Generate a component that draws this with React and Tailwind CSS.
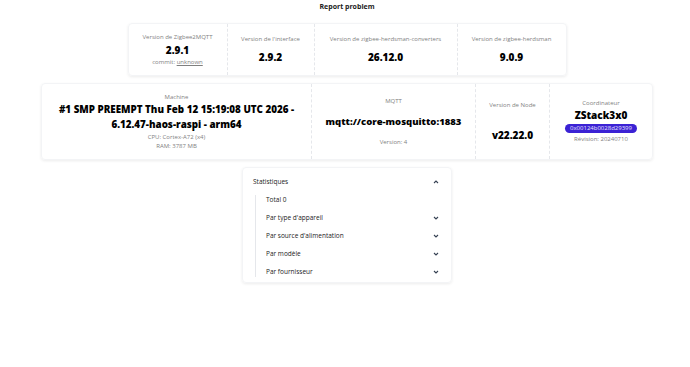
import React from 'react';

const Chevron = ({ up }) => (
  <svg width="6" height="4" viewBox="0 0 6 4" className="text-gray-700">
    <path d={up ? 'M1 3 L3 1 L5 3' : 'M1 1 L3 3 L5 1'} fill="none" stroke="currentColor" strokeWidth="1.1" />
  </svg>
);

// one stat column, rows centred like daisyUI's stat grid
const Stat = ({ title, value, desc, width, last, valueClass = 'text-[10px] leading-[14px]' }) => (
  <div
    className={`grid place-items-center text-center py-[8px] ${width} ${
      last ? '' : 'border-r border-dashed border-gray-200'
    }`}
  >
    <div className="text-[6px] leading-[9px] text-[#7f7f7f] whitespace-nowrap">{title}</div>
    <div className={`font-extrabold text-black ${valueClass}`}>{value}</div>
    {desc && <div className="text-[6px] leading-[9px] text-[#7f7f7f]">{desc}</div>}
  </div>
);

export default function App() {
  const stats = ["Par type d'appareil", "Par source d'alimentation", 'Par modèle', 'Par fournisseur'];

  return (
    <div className="w-[690px] h-[367px] bg-white font-['Open_Sans',sans-serif] flex flex-col items-center pl-[4px]">
      <div className="pt-[2px] text-[7px] leading-[10px] font-bold text-[#222]">Report problem</div>

      {/* versions */}
      <div className="mt-[11px] flex h-[53px] rounded-[4px] border border-gray-100 shadow-[0_1px_3px_rgba(0,0,0,0.08)]">
        <Stat
          width="w-[99px]"
          title="Version de Zigbee2MQTT"
          value="2.9.1"
          desc={
            <span>
              commit: <span className="underline">unknown</span>
            </span>
          }
        />
        <Stat width="w-[87px]" title="Version de l'interface" value="2.9.2" />
        <Stat width="w-[143px]" title="Version de zigbee-herdsman-converters" value="26.12.0" />
        <Stat width="w-[108px]" title="Version de zigbee-herdsman" value="9.0.9" last />
      </div>

      {/* environment */}
      <div className="mt-[7px] flex h-[77px] rounded-[4px] border border-gray-100 shadow-[0_1px_3px_rgba(0,0,0,0.08)]">
        <div className="w-[270px] flex flex-col items-center justify-center text-center border-r border-dashed border-gray-200">
          <div className="text-[6px] leading-[9px] text-[#7f7f7f]">Machine</div>
          <div className="text-[9.8px] leading-[15px] font-extrabold text-black">
            #1 SMP PREEMPT Thu Feb 12 15:19:08 UTC 2026 -<br />6.12.47-haos-raspi - arm64
          </div>
          <div className="text-[6px] leading-[10px] text-[#7f7f7f]">CPU: Cortex-A72 (x4)</div>
          <div className="text-[6px] leading-[9px] text-[#7f7f7f]">RAM: 3787 MB</div>
        </div>
        <Stat
          width="w-[164px]"
          title="MQTT"
          value="mqtt://core-mosquitto:1883"
          desc="Version: 4"
          valueClass="text-[9.5px] leading-[14px]"
        />
        <Stat width="w-[74px]" title="Version de Node" value="v22.22.0" />
        <div className="w-[102px] flex flex-col items-center justify-center text-center">
          <div className="text-[6px] leading-[9px] text-[#7f7f7f]">Coordinateur</div>
          <div className="text-[10px] leading-[15px] font-extrabold text-black">ZStack3x0</div>
          <div className="mt-[1px] h-[9px] px-[5px] rounded-full bg-[#3b22d4] text-[6px] leading-[9px] text-[#e6e2ff]">
            0x00124b0028d29399
          </div>
          <div className="mt-[2px] text-[6px] leading-[9px] text-[#7f7f7f]">Révision: 20240710</div>
        </div>
      </div>

      {/* statistics */}
      <div className="mt-[7px] w-[210px] h-[116px] rounded-[4px] border border-gray-100 shadow-[0_1px_3px_rgba(0,0,0,0.08)] pt-[5px] text-[6.5px] text-[#222]">
        <div className="h-[18px] flex items-center justify-between pl-[10px] pr-[12px]">
          <span>Statistiques</span>
          <Chevron up />
        </div>
        <div className="flex ml-[12px] pr-[12px]">
          <div className="w-px bg-gray-200 my-[4px]" />
          <div className="flex-1 pl-[10px]">
            <div className="h-[18px] flex items-center">Total 0</div>
            {stats.map((s) => (
              <div key={s} className="h-[18px] flex items-center justify-between">
                <span>{s}</span>
                <Chevron />
              </div>
            ))}
          </div>
        </div>
      </div>
    </div>
  );
}
